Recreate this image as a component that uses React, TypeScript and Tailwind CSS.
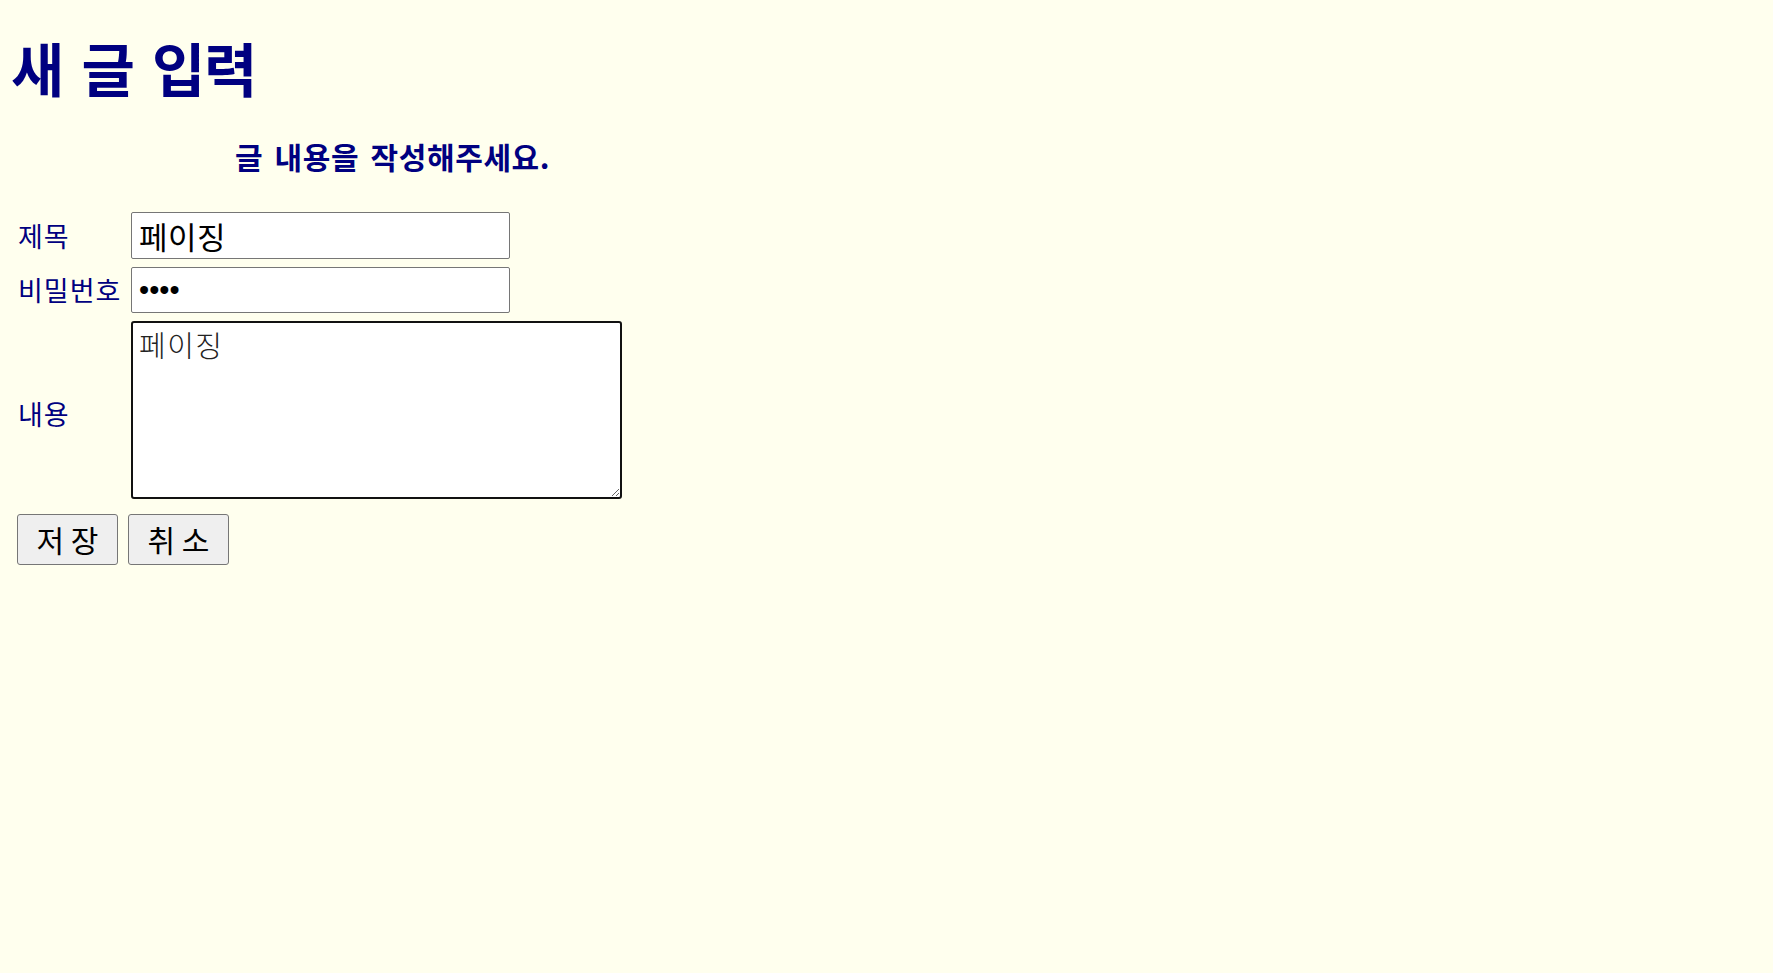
import { useState } from 'react';

const KR = "font-['Noto_Sans_CJK_KR','Noto_Sans',sans-serif]";

/**
 * 새 글 입력 폼
 */
const App = () => {
  const [title, setTitle] = useState('페이징');
  const [password, setPassword] = useState('1234');
  const [content, setContent] = useState('페이징');

  return (
    <div className={`min-h-screen bg-[#ffffee] px-[11px] ${KR}`}>
      <h1 className="pt-[38px] text-[58px] font-bold leading-[58px] text-[#000080] tracking-[-1.5px] [word-spacing:7px]">
        새 글 입력
      </h1>

      <h3 className="mt-[45px] pl-[224px] text-[30px] font-bold leading-[30px] text-[#000080] tracking-[0.6px] [word-spacing:4px]">
        글 내용을 작성해주세요.
      </h3>

      <form onSubmit={(e) => e.preventDefault()} className="mt-[41px]">
        <div className="grid grid-cols-[120px_auto] gap-y-[8px] items-center justify-start">
          <label className="pl-[7px] text-[27px] leading-[30px] text-[#000080] tracking-[1px]">제목</label>
          <input
            type="text"
            value={title}
            onChange={(e) => setTitle(e.target.value)}
            className="h-[47px] w-[379px] rounded-[2px] border border-[#767676] bg-white px-[7px] text-[31px] text-black tracking-[0.5px] outline-none"
          />

          <label className="pl-[7px] text-[27px] leading-[30px] text-[#000080] tracking-[1px]">비밀번호</label>
          <input
            type="password"
            value={password}
            onChange={(e) => setPassword(e.target.value)}
            className="h-[46px] w-[379px] rounded-[2px] border border-[#767676] bg-white px-[7px] font-['Liberation_Sans',sans-serif] text-[29px] text-black outline-none"
          />

          <label className="pl-[7px] pt-[8px] text-[27px] leading-[30px] text-[#000080] tracking-[1px]">내용</label>
          <textarea
            value={content}
            onChange={(e) => setContent(e.target.value)}
            className="h-[178px] w-[491px] resize rounded-[3px] border-2 border-[#111] bg-white px-[6px] py-[3px] text-[29px] font-light leading-[36px] text-[#222] tracking-[1.5px] outline-none"
          />
        </div>

        <div className="mt-[15px] flex gap-[10px] pl-[6px]">
          <button
            type="submit"
            className="h-[51px] w-[101px] rounded-[3px] border border-[#767676] bg-[#efefef] text-[30px] text-black"
          >
            저 장
          </button>
          <button
            type="button"
            className="h-[51px] w-[101px] rounded-[3px] border border-[#767676] bg-[#efefef] text-[30px] text-black"
          >
            취 소
          </button>
        </div>
      </form>
    </div>
  );
};

export default App;
